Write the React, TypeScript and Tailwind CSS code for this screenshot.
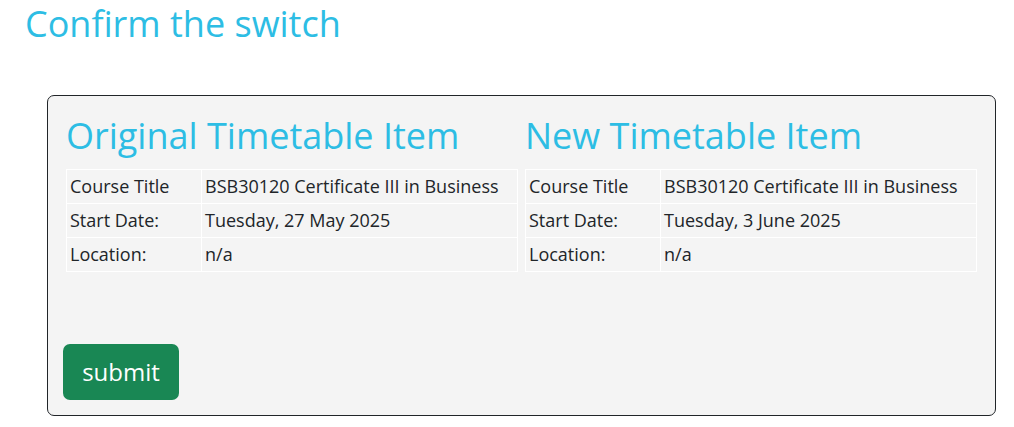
import React from "react";

const rowsA = [
  ["Course Title", "BSB30120 Certificate III in Business"],
  ["Start Date:", "Tuesday, 27 May 2025"],
  ["Location:", "n/a"],
];
const rowsB = [
  ["Course Title", "BSB30120 Certificate III in Business"],
  ["Start Date:", "Tuesday, 3 June 2025"],
  ["Location:", "n/a"],
];

function Item({ title, rows }: { title: string; rows: string[][] }) {
  return (
    <div className="flex-1 min-w-0">
      <h2 className="text-[36px] leading-[1.2] text-[#2dbde4] mb-[12px]">{title}</h2>
      <table className="w-full border-collapse text-[18px] text-[#212529]">
        <tbody>
          {rows.map((r) => (
            <tr key={r[0]}>
              <td className="border border-white w-[135px] h-[34px] px-[3px] py-0 align-middle">{r[0]}</td>
              <td className="border border-white h-[34px] px-[3px] py-0 align-middle">{r[1]}</td>
            </tr>
          ))}
        </tbody>
      </table>
    </div>
  );
}

export default function App() {
  return (
    <div className="bg-white w-[1014px] h-[427px] overflow-hidden" style={{ fontFamily: '"Open Sans", sans-serif' }}>
      <h1 className="text-[36px] leading-[1.2] text-[#2dbde4] pl-[25px] pt-[2px]">Confirm the switch</h1>
      <div className="mt-[50px] ml-[47px] w-[949px] h-[321px] border border-[#212529] rounded-[7px] bg-[#f4f4f4] pt-[18px] px-[18px] flex flex-col">
        <div className="flex gap-[7px]">
          <Item title="Original Timetable Item" rows={rowsA} />
          <Item title="New Timetable Item" rows={rowsB} />
        </div>
        <div className="mt-auto mb-[15px] -ml-[3px]">
          <button className="bg-[#198754] text-white text-[24px] rounded-[7px] w-[116px] h-[56px]">submit</button>
        </div>
      </div>
    </div>
  );
}
